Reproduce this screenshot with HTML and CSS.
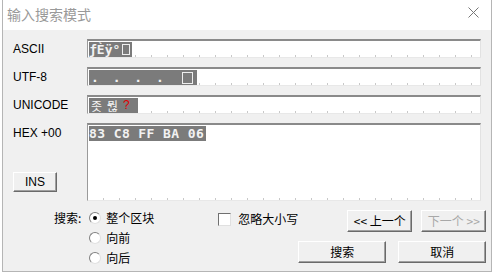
FILE: index.html
```html
<!DOCTYPE html>
<html lang="zh-CN">
<head>
    <meta charset="UTF-8">
    <title>输入搜索模式</title>
    <link rel="stylesheet" href="styles.css">
</head>
<body>
    <div class="dialog">
        <div class="titlebar">
            <span class="title">输入搜索模式</span>
            <svg class="close" width="11" height="11" viewBox="0 0 11 11">
                <path d="M0.5 0.5 L10.5 10.5 M10.5 0.5 L0.5 10.5" stroke="#777" stroke-width="1" fill="none"/>
            </svg>
        </div>
        <div class="body">
            <div class="row">
                <label class="lbl">ASCII</label>
                <div class="field"><span class="sel">ƒÈÿ°<i class="box"></i></span></div>
            </div>
            <div class="row">
                <label class="lbl">UTF-8</label>
                <div class="field"><span class="sel dots">. . . . <i class="box big"></i></span></div>
            </div>
            <div class="row">
                <label class="lbl">UNICODE</label>
                <div class="field"><span class="sel ko"><span>좃</span><span>뭖</span><span class="red">?</span></span></div>
            </div>
            <div class="row hex-row">
                <div class="hex-side">
                    <label class="lbl">HEX +00</label>
                    <button class="btn ins">INS</button>
                </div>
                <div class="field hex"><span class="sel">83 C8 FF BA 06</span></div>
            </div>
            <div class="bottom">
                <div class="search-opts">
                    <span class="opt-lbl">搜索:</span>
                    <div class="radios">
                        <label class="radio checked"><i></i>整个区块</label>
                        <label class="radio"><i></i>向前</label>
                        <label class="radio"><i></i>向后</label>
                    </div>
                </div>
                <label class="check"><i></i>忽略大小写</label>
                <div class="actions">
                    <div class="act-row">
                        <button class="btn nav">&lt;&lt; 上一个</button>
                        <button class="btn nav" disabled>下一个 &gt;&gt;</button>
                    </div>
                    <div class="act-row wide">
                        <button class="btn main">搜索</button>
                        <button class="btn main">取消</button>
                    </div>
                </div>
            </div>
        </div>
    </div>
</body>
</html>
```

FILE: styles.css
```css
html { box-sizing: border-box; }
*, *:before, *:after { box-sizing: inherit; }
body {
    margin: 0;
    background: #fff;
    font-family: "Noto Sans CJK SC", "Liberation Sans", sans-serif;
    font-size: 12px;
    color: #000;
    white-space: nowrap;
}
.dialog {
    margin-left: 2px;
    width: 490px;
    height: 272px;
    border: 1px solid #b5b5b5;
    border-top: none;
    background: #f0f0f0;
    display: flex;
    flex-direction: column;
    overflow: hidden;
}
.titlebar {
    flex-shrink: 0;
    height: 30px;
    background: #fff;
    display: flex;
    align-items: center;
    justify-content: space-between;
    padding: 0 12px 2px 4px;
}
.title {
    font-size: 14px;
    color: #999;
}
.close { margin-top: -4px; }
.body {
    padding: 9px 9px 0 10px;
    display: flex;
    flex-direction: column;
    gap: 9px;
}
.row {
    display: flex;
    align-items: center;
    flex-shrink: 0;
}
.lbl {
    width: 74px;
    font-family: "Liberation Sans", sans-serif;
    font-size: 12px;
}
.field {
    width: 394px;
    height: 19px;
    background-color: #fff;
    border-top: 2px solid #8a8a8a;
    border-left: 1px solid #9a9a9a;
    border-right: 1px solid #e2e2e2;
    border-bottom: 1px solid #e8e8e8;
    background-image: repeating-linear-gradient(to right, transparent 0 15px, #c8c8c8 15px 16px);
    background-size: 100% 2px;
    background-position: 0 100%;
    background-repeat: no-repeat;
    padding: 1px 0 0 1px;
    font-family: "DejaVu Sans Mono", "Liberation Mono", monospace;
    font-weight: bold;
    font-size: 13px;
    line-height: 15px;
}
.sel {
    display: inline-flex;
    align-items: center;
    height: 15px;
    background: #7b7b7b;
    color: #f2f2f2;
    white-space: pre;
    padding-right: 2px;
}
.box {
    display: inline-block;
    width: 8px;
    height: 11px;
    border: 1px solid #eee;
    margin-left: 2px;
}
.dots { padding: 0 4px 0 2px; letter-spacing: 3px; }
.box.big { width: 11px; height: 12px; margin-left: 4px; }
.ko {
    font-family: "Noto Sans CJK KR", sans-serif;
    font-weight: normal;
    font-size: 12px;
    gap: 5px;
    padding: 0 8px 0 2px;
}
.red {
    color: #e00000;
    font-family: "Liberation Sans", sans-serif;
}
.hex-row { align-items: stretch; }
.hex-side {
    width: 74px;
    display: flex;
    flex-direction: column;
    justify-content: space-between;
    padding: 3px 0 9px;
}
.field.hex {
    height: 78px;
    letter-spacing: 0.4px;
}
.btn {
    font-family: "Noto Sans CJK SC", "Liberation Sans", sans-serif;
    font-size: 12px;
    background: #f0f0f0;
    border: 1px solid;
    border-color: #fff #6a6a6a #6a6a6a #fff;
    box-shadow: inset -1px -1px 0 #a0a0a0;
    padding: 0;
    color: #000;
    height: 22px;
    line-height: 18px;
}
.btn:disabled { color: #a8a8a8; }
.ins {
    width: 44px;
    height: 20px;
    font-family: "Liberation Sans", sans-serif;
}
.bottom {
    display: flex;
    align-items: flex-start;
    flex-shrink: 0;
}
.search-opts {
    display: flex;
    margin-left: 41px;
    padding-top: 1px;
    gap: 8px;
}
.opt-lbl { line-height: 14px; }
.radios {
    display: flex;
    flex-direction: column;
    gap: 6px;
}
.radio, .check {
    display: flex;
    align-items: center;
    gap: 5px;
    line-height: 14px;
}
.radio i {
    width: 12px;
    height: 12px;
    border-radius: 50%;
    background: #fff;
    border: 1px solid;
    border-color: #808080 #e0e0e0 #e0e0e0 #808080;
    display: flex;
    align-items: center;
    justify-content: center;
}
.radio.checked i:after {
    content: "";
    width: 4px;
    height: 4px;
    border-radius: 50%;
    background: #000;
}
.check {
    margin-left: 64px;
    padding-top: 2px;
    gap: 7px;
}
.check i {
    width: 13px;
    height: 13px;
    background: #fff;
    border: 1px solid;
    border-color: #707070 #e0e0e0 #e0e0e0 #707070;
}
.actions {
    margin-left: auto;
    display: flex;
    flex-direction: column;
    align-items: flex-end;
    gap: 9px;
}
.act-row { display: flex; gap: 9px; }
.act-row.wide { gap: 12px; }
.nav { width: 65px; }
.main { width: 88px; }
```
